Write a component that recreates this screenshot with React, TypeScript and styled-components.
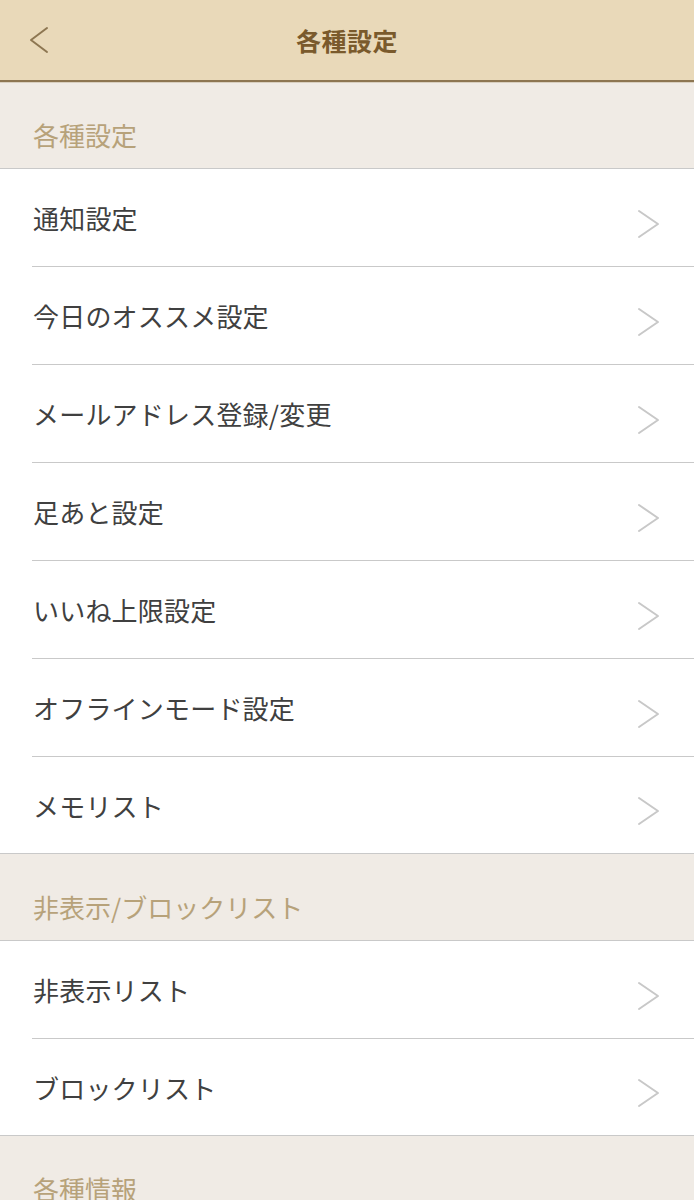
import React from 'react';
import styled, { createGlobalStyle } from 'styled-components';

const GlobalStyle = createGlobalStyle`
  html, body {
    margin: 0;
    padding: 0;
    background: #f0ebe5;
  }
  body {
    font-family: "Noto Sans CJK JP", "Noto Sans", sans-serif;
    -webkit-font-smoothing: antialiased;
  }
`;

const Page = styled.div`
  width: 694px;
  min-height: 1200px;
  background: #f0ebe5;
  overflow: hidden;
`;

const Header = styled.header`
  height: 80px;
  background: #e9d9b9;
  border-bottom: 2px solid #8d7651;
  box-shadow: 0 1px 0 #d9cfbf;
  display: grid;
  grid-template-columns: 80px 1fr 80px;
  align-items: center;
`;

const BackButton = styled.button`
  border: none;
  background: none;
  padding: 0 0 0 28px;
  height: 100%;
  display: flex;
  align-items: center;
  cursor: pointer;
`;

const Title = styled.h1`
  margin: 0;
  text-align: center;
  font-size: 25px;
  font-weight: 700;
  color: #7a5a2c;
  letter-spacing: 0.5px;
`;

const SectionHeader = styled.div`
  height: 87px;
  box-sizing: border-box;
  display: flex;
  align-items: flex-end;
  padding: 0 0 15px 33px;
  font-size: 26px;
  color: #b7a27a;
  border-bottom: 1px solid #c9c9c9;
`;

const List = styled.ul`
  list-style: none;
  margin: 0;
  padding: 0 0 0 32px;
  background: #fff;
  border-bottom: 1px solid #c9c9c9;
`;

const Row = styled.li<{ $last?: boolean }>`
  height: ${p => (p.$last ? '96px' : '97px')};
  display: flex;
  align-items: center;
  justify-content: space-between;
  padding-right: 32px;
  border-bottom: ${p => (p.$last ? 'none' : '1px solid #c9c9c9')};
  font-size: 26px;
  color: #404040;
  cursor: pointer;
`;

const Label = styled.span`
  margin-left: 1px;
  letter-spacing: 0.2px;
`;

const Chevron = styled.svg`
  margin-top: 12px;
  flex-shrink: 0;
`;

const ChevronRight = () => (
  <Chevron width="26" height="32" viewBox="0 0 26 32">
    <path d="M3 3 L22 16 L3 29" fill="none" stroke="#c8c8c8" strokeWidth="2" strokeLinecap="round" strokeLinejoin="round" />
  </Chevron>
);

const sections = [
  {
    title: '各種設定',
    items: [
      '通知設定',
      '今日のオススメ設定',
      'メールアドレス登録/変更',
      '足あと設定',
      'いいね上限設定',
      'オフラインモード設定',
      'メモリスト',
    ],
  },
  {
    title: '非表示/ブロックリスト',
    items: ['非表示リスト', 'ブロックリスト'],
  },
  {
    title: '各種情報',
    items: ['利用規約', 'プライバシーポリシー'],
  },
];

const App: React.FC = () => {
  return (
    <Page>
      <GlobalStyle />
      <Header>
        <BackButton aria-label="戻る">
          <svg width="22" height="28" viewBox="0 0 22 28">
            <path d="M19 2 L3 14 L19 26" fill="none" stroke="#8d7651" strokeWidth="2" strokeLinecap="round" strokeLinejoin="round" />
          </svg>
        </BackButton>
        <Title>各種設定</Title>
        <div />
      </Header>

      {sections.map(section => (
        <section key={section.title}>
          <SectionHeader>{section.title}</SectionHeader>
          <List>
            {section.items.map((item, i) => (
              <Row key={item} $last={i === section.items.length - 1}>
                <Label>{item}</Label>
                <ChevronRight />
              </Row>
            ))}
          </List>
        </section>
      ))}
    </Page>
  );
};

export default App;
